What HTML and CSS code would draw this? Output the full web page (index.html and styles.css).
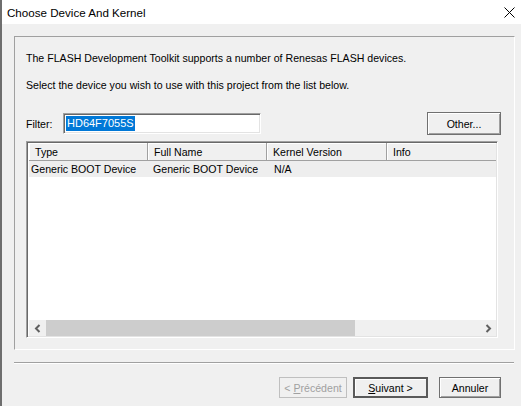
FILE: index.html
```html
<!DOCTYPE html>
<html>
<head>
<meta charset="utf-8">
<link rel="stylesheet" href="styles.css">
</head>
<body>
<div class="window">
  <div class="titlebar">
    <span class="title">Choose Device And Kernel</span>
    <svg class="close" width="11" height="11" viewBox="0 0 11 11"><path d="M0.5 0.5 L10.5 10.5 M10.5 0.5 L0.5 10.5" stroke="#000" stroke-width="1" fill="none"/></svg>
  </div>
  <div class="client">
    <div class="group">
      <p class="line1">The FLASH Development Toolkit supports a number of Renesas FLASH devices.</p>
      <p class="line2">Select the device you wish to use with this project from the list below.</p>
      <div class="filter-row">
        <span class="flabel">Filter:</span>
        <div class="input"><span class="sel">HD64F7055S</span></div>
        <div class="spacer"></div>
        <div class="btn other">Other...</div>
      </div>
      <div class="list">
        <div class="header">
          <div class="hc c1">Type</div>
          <div class="hc c2">Full Name</div>
          <div class="hc c3">Kernel Version</div>
          <div class="hc c4">Info</div>
        </div>
        <div class="row">
          <div class="rc c1">Generic BOOT Device</div>
          <div class="rc c2">Generic BOOT Device</div>
          <div class="rc c3">N/A</div>
          <div class="rc c4"></div>
        </div>
        <div class="listbody"></div>
        <div class="hscroll">
          <div class="arrow">
            <svg width="8" height="9" viewBox="0 0 8 9"><path d="M5.5 1 L2 4.5 L5.5 8" stroke="#606060" stroke-width="2" fill="none"/></svg>
          </div>
          <div class="track"><div class="thumb"></div></div>
          <div class="arrow">
            <svg width="8" height="9" viewBox="0 0 8 9"><path d="M2.5 1 L6 4.5 L2.5 8" stroke="#606060" stroke-width="2" fill="none"/></svg>
          </div>
        </div>
      </div>
    </div>
    <div class="sep"></div>
    <div class="buttons">
      <div class="btn prev disabled"><span>&lt; <u>P</u>récédent</span></div>
      <div class="btn next default"><span><u>S</u>uivant &gt;</span></div>
      <div class="btn cancel"><span>Annuler</span></div>
    </div>
  </div>
</div>
</body>
</html>
```

FILE: styles.css
```css
html, body {
  margin: 0;
  padding: 0;
}
body {
  width: 521px;
  height: 406px;
  overflow: hidden;
  background: #f0f0f0;
  font-family: "Liberation Sans", Arial, sans-serif;
  font-size: 10.6px;
  color: #000;
}
.window {
  width: 519px;
  height: 406px;
  border-left: 2px solid #6e6e6e;
  display: flex;
  flex-direction: column;
}
.titlebar {
  height: 24px;
  background: #fff;
  display: flex;
  align-items: center;
  padding-left: 5px;
  padding-right: 6px;
}
.title {
  font-family: "Liberation Sans", Arial, sans-serif;
  font-size: 11.6px;
  flex: 1;
}
.close {
  margin-top: 1px;
}
.client {
  padding: 12px 0 0 12px;
}
.group {
  width: 488px;
  height: 312px;
  border-top: 1px solid #a0a0a0;
  border-left: 1px solid #a0a0a0;
  border-right: 1px solid #fff;
  border-bottom: 1px solid #fff;
  padding: 0 0 0 11px;
  display: flex;
  flex-direction: column;
}
.group p {
  margin: 0;
  line-height: 13px;
}
.line1 { margin-top: 15px !important; }
.line2 { margin-top: 14px !important; }
.filter-row {
  display: flex;
  align-items: center;
  margin-top: 20px;
  height: 23px;
  width: 475px;
}
.flabel {
  width: 37px;
}
.input {
  width: 192px;
  height: 17px;
  border-top: 1px solid #a0a0a0;
  border-left: 1px solid #a0a0a0;
  border-right: 1px solid #fff;
  border-bottom: 1px solid #fff;
  box-shadow: inset 1px 1px 0 #696969, inset -1px -1px 0 #e3e3e3;
  background: #fff;
  padding: 1px 2px;
  display: flex;
  align-items: center;
}
.sel {
  background: #0078d7;
  color: #fff;
  line-height: 15px;
  padding: 0 1px;
  font-size: 11px;
}
.spacer { flex: 1; }
.btn {
  display: flex;
  align-items: center;
  justify-content: center;
  box-sizing: border-box;
  background: #f0f0f0;
  border: 1px solid #707070;
  box-shadow: inset 1px 1px 0 #fff, inset -1px -1px 0 #a0a0a0;
  white-space: pre;
}
.other {
  width: 74px;
  height: 23px;
}
.list {
  margin-top: 6px;
  width: 472px;
  height: 197px;
  box-sizing: border-box;
  border-top: 1px solid #a0a0a0;
  border-left: 1px solid #a0a0a0;
  border-right: 1px solid #fff;
  border-bottom: 1px solid #fff;
  box-shadow: inset 1px 1px 0 #696969, inset -1px -1px 0 #e3e3e3;
  padding: 1px 1px 1px 2px;
  background: #fff;
  display: flex;
  flex-direction: column;
}
.header {
  display: flex;
  height: 17px;
  background: #f0f0f0;
  border-bottom: 1px solid #a0a0a0;
  flex-shrink: 0;
}
.hc {
  box-sizing: border-box;
  height: 17px;
  line-height: 18px;
  padding-left: 6px;
  border-right: 1px solid #a0a0a0;
  box-shadow: inset 1px 1px 0 #fff;
}
.c1 { width: 119px; }
.c2 { width: 119px; }
.c3 { width: 120px; }
.c4 { flex: 1; border-right: none; }
.row {
  display: flex;
  height: 16px;
  background: #eeeeee;
  flex-shrink: 0;
}
.rc {
  line-height: 16px;
  padding-left: 2px;
  box-sizing: border-box;
  white-space: nowrap;
}
.row .c2 { padding-left: 5px; }
.row .c3 { padding-left: 7px; }
.listbody { flex: 1; }
.hscroll {
  height: 16px;
  display: flex;
  background: #f0f0f0;
  flex-shrink: 0;
}
.arrow {
  width: 17px;
  display: flex;
  align-items: center;
  justify-content: center;
}
.track {
  flex: 1;
  display: flex;
}
.thumb {
  width: 309px;
  background: #cdcdcd;
}
.sep {
  margin-top: 12px;
  width: 500px;
  height: 1px;
  background: #a0a0a0;
  border-bottom: 1px solid #fff;
}
.buttons {
  display: flex;
  margin-top: 13px;
  padding-left: 265px;
}
.buttons .btn {
  height: 21px;
}
.prev {
  width: 68px;
  border-color: #bfbfbf;
  box-shadow: none;
  color: #a0a0a0;
}
.next {
  width: 75px;
  margin-left: 6px;
  border: 2px solid #5a5a5a;
  box-shadow: inset 1px 1px 0 #fff;
}
.cancel {
  width: 62px;
  margin-left: 11px;
}
u { text-decoration: underline; text-underline-offset: 1px; }
```
